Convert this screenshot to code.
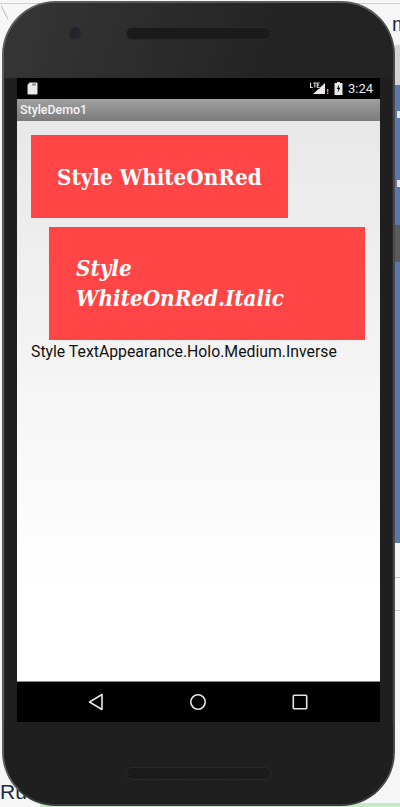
<script>
  // device frame around the running app
</script>

<div class="desktop">
  <span class="ide-m">m</span>
  <span class="ide-run">Ru</span>
  <div class="ide-rule"></div>
  <div class="ide-slash"></div>
  <div class="ide-tab"></div>
  <div class="ide-strip">
    <span class="mark one"></span>
    <span class="mark two"></span>
    <span class="ide-gap"></span>
  </div>
  <div class="ide-lines"></div>
  <div class="ide-green"></div>

  <div class="phone">
    <div class="top-bezel">
      <span class="camera"></span>
      <span class="speaker"></span>
    </div>

    <div class="screen">
      <div class="status">
        <svg class="sd" viewBox="0 0 11 13" width="11" height="13">
          <path d="M2.5 0.5H9.5Q10.5 0.5 10.5 1.5V11.5Q10.5 12.5 9.5 12.5H1.5Q0.5 12.5 0.5 11.5V3Z" fill="#e8e8e8" />
          <path d="M5.5 1.5h1v2h-1zM7.5 1.5h1v2h-1z" fill="#333" />
        </svg>
        <div class="status-right">
          <svg class="signal" viewBox="0 0 16 13" width="16" height="13">
            <path d="M15 1V12H3Z" fill="#e8e8e8" />
            <path d="M0 0H10V6.5H0Z" fill="#000" />
            <path d="M0.5 0.5V5.5H2.8M3.2 1H6.4M4.8 1V5.5M7.2 5.5V1H9.6M7.2 3.1H9.2M7.2 5.5H9.6" fill="none" stroke="#ddd" stroke-width="1.1" />
          </svg>
          <span class="bang">!</span>
          <svg class="battery" viewBox="0 0 9 13" width="9" height="13">
            <path d="M3 0H6V1H8.5V13H0.5V1H3Z" fill="#e8e8e8" />
            <path d="M5.2 2.5L2.8 7H4.4L3.8 10.5L6.3 5.8H4.7Z" fill="#000" />
          </svg>
          <span class="clock">3:24</span>
        </div>
      </div>

      <div class="titlebar">StyleDemo1</div>

      <div class="content">
        <div class="box plain">Style WhiteOnRed</div>
        <div class="box italic">Style<br />WhiteOnRed.Italic</div>
        <div class="inverse">Style TextAppearance.Holo.Medium.Inverse</div>
      </div>

      <div class="navbar">
        <svg viewBox="0 0 16 18" width="16" height="18">
          <path d="M14 1.5V16.5L1.5 9Z" fill="none" stroke="#e4e4e4" stroke-width="1.6" stroke-linejoin="round" />
        </svg>
        <svg viewBox="0 0 18 18" width="18" height="18">
          <circle cx="9" cy="9" r="7.2" fill="none" stroke="#e4e4e4" stroke-width="1.6" />
        </svg>
        <svg viewBox="0 0 16 16" width="16" height="16">
          <rect x="1.3" y="1.3" width="13.4" height="13.4" rx="1" fill="none" stroke="#e4e4e4" stroke-width="1.6" />
        </svg>
      </div>
    </div>

    <div class="bottom-bezel">
      <span class="speaker"></span>
    </div>
  </div>
</div>

<style>
  :global(body) {
    margin: 0;
    background: #fff;
  }

  .desktop {
    position: relative;
    width: 400px;
    height: 807px;
    overflow: hidden;
    padding: 1px 5px 1px 2px;
    box-sizing: border-box;
    background: #f6f6f6;
  }

  .ide-m {
    position: absolute;
    top: 12px;
    right: 0;
    width: 8px;
    overflow: hidden;
    font: 20px/24px "Liberation Sans", sans-serif;
    color: #1d2a44;
  }

  .ide-run {
    position: absolute;
    top: 780px;
    left: 0;
    font: 21px/24px "Liberation Sans", sans-serif;
    color: #1d2a44;
  }

  .ide-rule {
    position: absolute;
    top: 3px;
    left: 0;
    right: 0;
    height: 1px;
    background: #d0d0d0;
  }

  .ide-slash {
    position: absolute;
    top: 5px;
    left: 4px;
    width: 1px;
    height: 15px;
    background: #bbb;
    transform: rotate(-27deg);
  }

  .ide-tab {
    position: absolute;
    top: 45px;
    right: 0;
    width: 6px;
    height: 40px;
    background: #d4d4d4;
  }

  .ide-strip {
    position: absolute;
    top: 85px;
    right: 0;
    width: 5px;
    height: 458px;
    background: #5b77b0;
  }

  .mark {
    position: absolute;
    right: 0;
    width: 3px;
    height: 7px;
    background: #f4e4dc;
  }

  .one {
    top: 26px;
  }

  .two {
    top: 95px;
  }

  .ide-gap {
    position: absolute;
    top: 140px;
    right: 0;
    width: 5px;
    height: 37px;
    background: #5a5a5a;
  }

  .ide-lines {
    position: absolute;
    top: 577px;
    right: 0;
    width: 5px;
    height: 34px;
    box-sizing: border-box;
    border-top: 1px solid #c4c4c4;
    border-bottom: 1px solid #c4c4c4;
  }

  .ide-green {
    position: absolute;
    left: 40px;
    right: 0;
    bottom: 0;
    height: 4px;
    background: #c4ecc4;
  }

  .phone {
    position: relative;
    height: 100%;
    display: flex;
    flex-direction: column;
    box-sizing: border-box;
    padding: 0 13px;
    background: #1f1f1f;
    border-radius: 54px;
    border: 2px solid #3a3a3a;
    border-top-color: #5a5a5a;
    border-left-color: #5f5f5f;
    border-right-color: #4a4a4a;
    box-shadow: inset 0 0 0 1px #2a2a2a;
  }

  .top-bezel {
    height: 75px;
    margin: 0 -13px;
    flex: none;
    position: relative;
    display: flex;
    justify-content: center;
    padding-top: 24px;
    box-sizing: border-box;
    border-radius: 52px 52px 0 0;
    background: linear-gradient(105deg, #363636, #232323 70%);
  }

  .camera {
    position: absolute;
    left: 65px;
    top: 24px;
    width: 12px;
    height: 12px;
    border-radius: 50%;
    background: #24242c;
  }

  .speaker {
    display: block;
    width: 145px;
    height: 13px;
    border-radius: 6px;
    background-color: #1c1c1c;
    background-image: radial-gradient(#0c0c0c 0.7px, transparent 0.8px);
    background-size: 2.5px 2.5px;
    border: 1px solid #2a2a2a;
    box-sizing: border-box;
  }

  .screen {
    width: 363px;
    height: 644px;
    display: flex;
    flex-direction: column;
    flex: none;
  }

  .status {
    height: 21px;
    background: #000;
    display: flex;
    justify-content: space-between;
    align-items: center;
    padding: 0 7px 0 10px;
    flex: none;
  }

  .sd {
    display: block;
  }

  .status-right {
    display: flex;
    align-items: center;
  }

  .signal {
    display: block;
  }

  .bang {
    font: bold 8px "Liberation Sans", sans-serif;
    color: #ccc;
    margin: 6px 5px 0 0;
  }

  .battery {
    display: block;
    margin-right: 5px;
  }

  .clock {
    font: 400 13px Roboto, sans-serif;
    color: #e8e8e8;
  }

  .titlebar {
    height: 22px;
    flex: none;
    box-sizing: border-box;
    padding-left: 3px;
    background: linear-gradient(#a0a0a0, #7c7c7c);
    color: #f4f4f4;
    font: 500 12.4px/21px Roboto, sans-serif;
  }

  .content {
    flex: 1;
    display: flex;
    flex-direction: column;
    align-items: flex-start;
    padding: 14px 0 0 14px;
    background: linear-gradient(#e8e8e8, #fff 85%);
  }

  .box {
    background: #ff4545;
    color: #fff;
    font-family: "DejaVu Serif Condensed", "DejaVu Serif", serif;
    font-weight: bold;
    font-size: 22.25px;
    box-sizing: border-box;
  }

  .plain {
    width: 257px;
    height: 83px;
    padding: 26px 0 0 26px;
    line-height: 32px;
  }

  .italic {
    width: 316px;
    height: 113px;
    margin: 9px 0 0 18px;
    padding: 26px 0 0 27px;
    line-height: 30px;
    font-style: italic;
  }

  .inverse {
    margin-top: 2px;
    font: 15.8px/20px Roboto, sans-serif;
    color: #111;
  }

  .navbar {
    height: 41px;
    flex: none;
    background: #000;
    border-top: 1px solid #8a8a8a;
    box-sizing: border-box;
    padding: 0 1px 1px 0;
    display: grid;
    grid-template-columns: repeat(3, 102px);
    justify-items: center;
    align-items: center;
    justify-content: center;
  }

  .bottom-bezel {
    flex: 1;
    margin: 0 -13px;
    display: flex;
    justify-content: center;
    align-items: flex-end;
    padding-bottom: 24px;
    border-radius: 0 0 52px 52px;
    background: #1f1f1f;
  }
</style>
